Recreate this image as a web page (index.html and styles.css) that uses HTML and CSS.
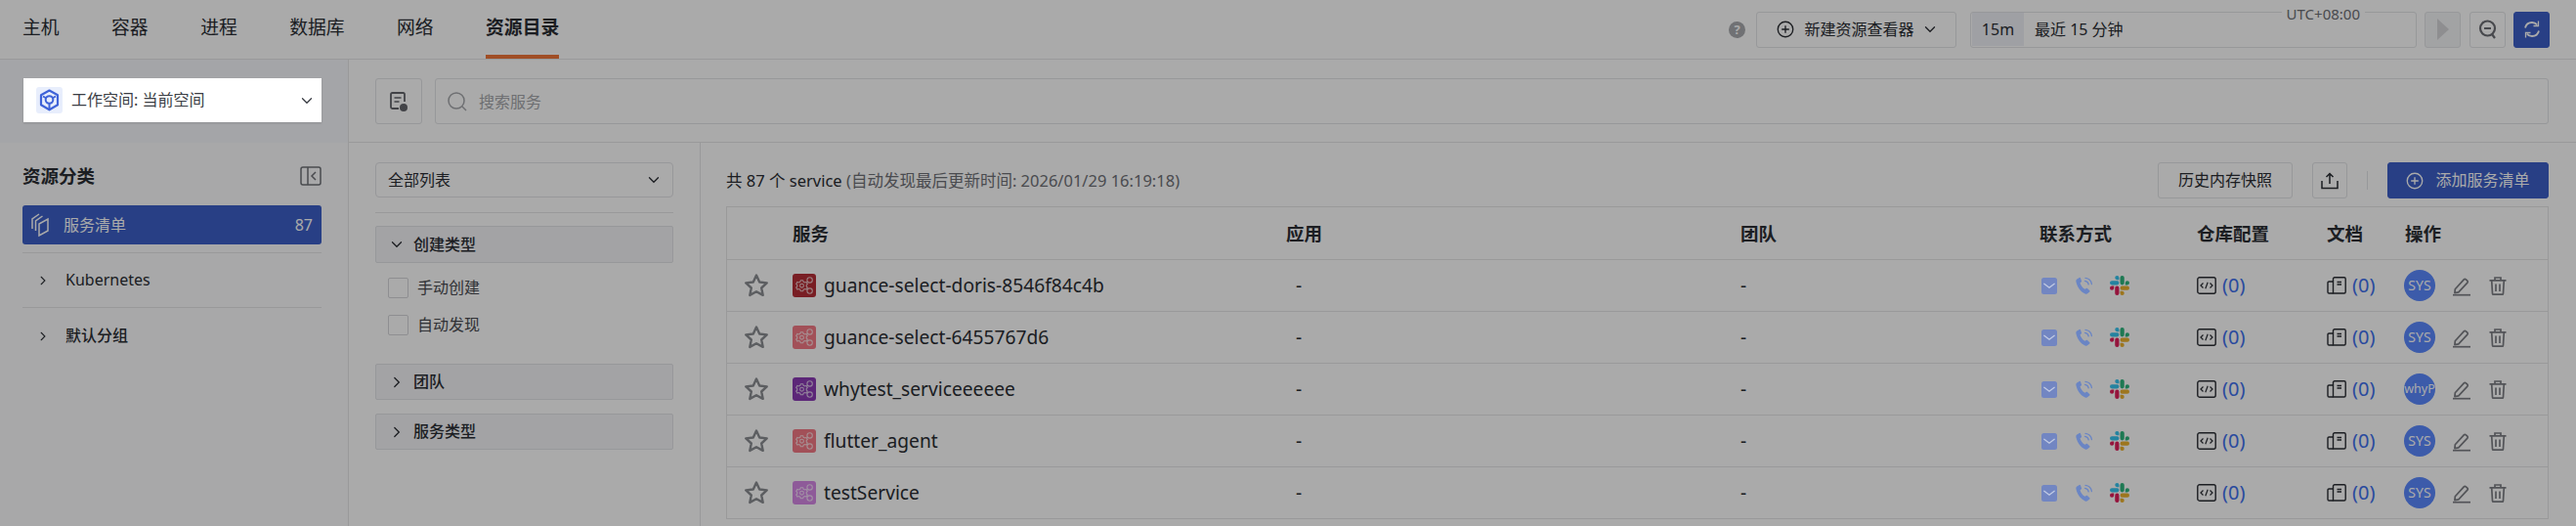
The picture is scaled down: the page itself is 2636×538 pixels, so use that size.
FILE: index.html
```html
<!DOCTYPE html>
<html lang="zh-CN">
<head>
<meta charset="utf-8">
<title>资源目录</title>
<link rel="stylesheet" href="styles.css">
</head>
<body>
<svg class="defs" width="0" height="0" aria-hidden="true">
  <defs>
    <symbol id="i-chev-d" viewBox="0 0 12 12"><path d="M1.5 3.8 6 8.3l4.5-4.5" fill="none" stroke="currentColor" stroke-width="1.3" stroke-linecap="round"/></symbol>
    <symbol id="i-chev-r" viewBox="0 0 12 12"><path d="M3.8 1.5 8.3 6l-4.5 4.5" fill="none" stroke="currentColor" stroke-width="1.3" stroke-linecap="round"/></symbol>
    <symbol id="i-plus" viewBox="0 0 20 20"><circle cx="10" cy="10" r="8.6" fill="none" stroke="currentColor" stroke-width="1.5"/><path d="M10 5.8v8.4M5.8 10h8.4" stroke="currentColor" stroke-width="1.5"/></symbol>
    <symbol id="i-star" viewBox="0 0 26 26"><path d="m13 2.6 3.2 6.9 7.5.9-5.5 5.1 1.5 7.4L13 19.2l-6.700 3.700 1.500-7.400-5.500-5.100 7.500-.9z" fill="none" stroke="currentColor" stroke-width="2.400" stroke-linejoin="round"/></symbol>
    <symbol id="i-svc" viewBox="0 0 24 24">
      <g fill="none" stroke="#fff" stroke-width="1.100">
        <circle cx="9.500" cy="12.200" r="1.900"/>
        <path d="m8.300 6.800 2.400 0 .5 1.500 1.500.7 1.400-.5 1.200 2-1.100 1.100v1.300l1.100 1.100-1.200 2-1.400-.5-1.500.7-.5 1.500H8.300l-.5-1.500-1.500-.7-1.400.5-1.200-2 1.100-1.100v-1.300L3.700 10.500l1.200-2 1.400.5 1.500-.7z"/>
        <circle cx="17.600" cy="6.400" r="2.700"/>
        <circle cx="17.600" cy="17.600" r="2.700"/>
      </g>
    </symbol>
    <symbol id="i-mail" viewBox="0 0 16 17"><rect width="16" height="17" rx="2.500" fill="#7286c2"/><path d="m2.800 6.300 5.200 4 5.200-4" fill="none" stroke="#c2cbe4" stroke-width="1.300" stroke-linecap="round"/></symbol>
    <symbol id="i-phone" viewBox="0 0 20 20"><path d="M2.300 3.600 4.800 1.900c.5-.3 1 0 1.200.5l1 2.800c.2.500 0 .9-.4 1.200L5.500 7.200c.6 2.500 2.700 5.400 5 6.600l1.300-.9c.4-.3.900-.2 1.200.1l2.300 2.300c.4.400.3 1-.1 1.300l-1.800 1.500c-.8.6-1.800.7-2.700.3C5.800 16.300 2.600 11.700 1.400 6c-.2-.9.200-1.900.9-2.400z" fill="#6a85c4"/><path d="M10.500 5.300c1.900.2 3.400 1.700 3.700 3.600M11 2.300c3.400.3 6 3 6.400 6.300" fill="none" stroke="#6a85c4" stroke-width="1.300" stroke-linecap="round"/></symbol>
    <symbol id="i-slack" viewBox="0 0 24 24">
      <path fill="#e01e5a" d="M5.042 15.165a2.528 2.528 0 0 1-2.520 2.523A2.528 2.528 0 0 1 0 15.165a2.527 2.527 0 0 1 2.522-2.520h2.520v2.520zM6.313 15.165a2.527 2.527 0 0 1 2.521-2.520 2.527 2.527 0 0 1 2.521 2.520v6.313A2.528 2.528 0 0 1 8.834 24a2.528 2.528 0 0 1-2.521-2.522v-6.313z"/>
      <path fill="#36c5f0" d="M8.834 5.042a2.528 2.528 0 0 1-2.521-2.520A2.528 2.528 0 0 1 8.834 0a2.528 2.528 0 0 1 2.521 2.522v2.520H8.834zM8.834 6.313a2.528 2.528 0 0 1 2.521 2.521 2.528 2.528 0 0 1-2.521 2.521H2.522A2.528 2.528 0 0 1 0 8.834a2.528 2.528 0 0 1 2.522-2.521h6.312z"/>
      <path fill="#2eb67d" d="M18.956 8.834a2.528 2.528 0 0 1 2.522-2.521A2.528 2.528 0 0 1 24 8.834a2.528 2.528 0 0 1-2.522 2.521h-2.522V8.834zM17.688 8.834a2.528 2.528 0 0 1-2.523 2.521 2.527 2.527 0 0 1-2.520-2.521V2.522A2.527 2.527 0 0 1 15.165 0a2.528 2.528 0 0 1 2.523 2.522v6.312z"/>
      <path fill="#ecb22e" d="M15.165 18.956a2.528 2.528 0 0 1 2.523 2.522A2.528 2.528 0 0 1 15.165 24a2.527 2.527 0 0 1-2.520-2.522v-2.522h2.520zM15.165 17.688a2.527 2.527 0 0 1-2.520-2.523 2.526 2.526 0 0 1 2.520-2.520h6.313A2.527 2.527 0 0 1 24 15.165a2.528 2.528 0 0 1-2.522 2.523h-6.313z"/>
    </symbol>
    <symbol id="i-code" viewBox="0 0 20 18"><rect x=".8" y=".8" width="18.400" height="16.400" rx="2" fill="none" stroke="currentColor" stroke-width="1.400"/><path d="M6.500 6.500 4 9l2.500 2.500M13.500 6.500 16 9l-2.500 2.500M11.200 5.800 8.800 12.200" fill="none" stroke="currentColor" stroke-width="1.200"/></symbol>
    <symbol id="i-doc" viewBox="0 0 20 18"><path d="M6.500 5H2.300C1.500 5 1 5.500 1 6.300v9.400c0 .8.500 1.300 1.300 1.300h4.200" fill="none" stroke="currentColor" stroke-width="1.400"/><path d="M6.500 17V2.300c0-.9.600-1.500 1.500-1.500h9.700c.9 0 1.500.6 1.500 1.500v13.200c0 .9-.6 1.500-1.500 1.500H6.500z" fill="none" stroke="currentColor" stroke-width="1.400"/><path d="M10.500 5.500h4.500M10.500 8h4.500" stroke="currentColor" stroke-width="1.300"/></symbol>
    <symbol id="i-pen" viewBox="0 0 20 20"><path d="m3.300 13.300 9-9.900c.6-.6 1.400-.6 2-.1l1.500 1.400c.6.600.6 1.400.1 2l-9.100 9.700-3.900.8z" fill="none" stroke="currentColor" stroke-width="1.700" stroke-linejoin="round"/><path d="M1 19.200h18" stroke="currentColor" stroke-width="1.700"/></symbol>
    <symbol id="i-trash" viewBox="0 0 20 20"><path d="M1.500 4.300h17M7 4.300V1.500h6v2.800M3.700 4.300l.8 13.400c0 .5.500 1 1 1h9c.5 0 1-.5 1-1l.8-13.400M8 8v7.500M12 8v7.500" fill="none" stroke="currentColor" stroke-width="1.700"/></symbol>
  </defs>
</svg>

<div class="app">
  <header class="topbar">
    <nav class="tabs">
      <span class="tab">主机</span>
      <span class="tab">容器</span>
      <span class="tab">进程</span>
      <span class="tab">数据库</span>
      <span class="tab">网络</span>
      <span class="tab tab-active">资源目录</span>
    </nav>
    <div class="top-tools">
      <span class="help">?</span>
      <button class="btn btn-new"><svg class="ic18"><use href="#i-plus"/></svg><span>新建资源查看器</span><svg class="ic12"><use href="#i-chev-d"/></svg></button>
      <div class="timebox">
        <span class="time-tag">15m</span>
        <span class="time-text">最近 15 分钟</span>
        <span class="tz">UTC+08:00</span>
      </div>
      <button class="btn btn-square btn-play"><svg width="12" height="22" viewBox="0 0 12 22"><path d="M0 0 12 11 0 22z" fill="#d6d6d9"/></svg></button>
      <button class="btn btn-square btn-zoom"><svg width="20" height="22" viewBox="0 0 20 22"><circle cx="9.500" cy="10" r="7.500" fill="none" stroke="currentColor" stroke-width="2.200"/><path d="M6 10h7M14 16l3 4" stroke="currentColor" stroke-width="2.200"/></svg></button>
      <button class="btn btn-square btn-refresh"><svg width="20" height="22" viewBox="0 0 20 22"><path d="M3 9.500C3.800 6 6.600 4 10 4c2.200 0 4 .9 5.200 2.400M17 12.500C16.200 16 13.400 18 10 18c-2.200 0-4-.9-5.200-2.400" fill="none" stroke="#fff" stroke-width="1.800"/><path d="M16.500 2.500v5h-5M3.500 19.500v-5h5" fill="none" stroke="#fff" stroke-width="1.300"/></svg></button>
    </div>
  </header>

  <div class="body">
    <aside class="side">
      <div class="side-band">
        <div class="workspace">
          <span class="ws-icon"><svg width="21" height="23" viewBox="0 0 21 23"><path d="M10.500 1.500 19 6.200v10.100l-8.500 5-8.500-5V6.200z" fill="none" stroke="#3f63d8" stroke-width="2.200" stroke-linejoin="round"/><circle cx="10.500" cy="11" r="3.800" fill="none" stroke="#3f63d8" stroke-width="2"/><path d="M10.500 15v6M4 7.500l3.500 2M17 7.500l-3.500 2" stroke="#3f63d8" stroke-width="2"/></svg></span>
          <span class="ws-text">工作空间: 当前空间</span>
          <svg class="ic12 ws-chev"><use href="#i-chev-d"/></svg>
        </div>
      </div>
      <div class="side-list">
        <div class="side-title">
          <span>资源分类</span>
          <svg width="22" height="20" viewBox="0 0 22 20"><rect x="1" y="1" width="20" height="18" rx="2" fill="none" stroke="currentColor" stroke-width="1.500"/><path d="M8 1v18M16 6l-4 4 4 4" fill="none" stroke="currentColor" stroke-width="1.500"/></svg>
        </div>
        <div class="side-active">
          <svg width="20" height="26" viewBox="0 0 20 26"><g fill="none" stroke="#fff" stroke-width="1.500"><path d="M2 17V7l7-5"/><path d="M5.500 19V9l7-5"/><path d="M9 24V12l9-5v12z"/></g></svg>
          <span class="side-active-name">服务清单</span>
          <span class="side-count">87</span>
        </div>
        <div class="side-group"><svg class="ic12"><use href="#i-chev-r"/></svg><span>Kubernetes</span></div>
        <div class="side-group side-group-strong"><svg class="ic12"><use href="#i-chev-r"/></svg><span>默认分组</span></div>
      </div>
    </aside>

    <main class="main">
      <div class="searchrow">
        <button class="btn search-hist"><svg width="20" height="22" viewBox="0 0 20 22"><path d="M16 11V3.500C16 2.500 15.500 2 14.500 2h-11C2.500 2 2 2.500 2 3.500v13c0 1 .5 1.500 1.500 1.500H10" fill="none" stroke="currentColor" stroke-width="1.800"/><path d="M5.500 7h7M5.500 11h5" stroke="currentColor" stroke-width="1.600"/><circle cx="15" cy="17" r="4" fill="currentColor"/></svg></button>
        <div class="search">
          <svg width="22" height="22" viewBox="0 0 22 22"><circle cx="10" cy="10" r="8" fill="none" stroke="currentColor" stroke-width="1.500"/><path d="m16 16 4 4" stroke="currentColor" stroke-width="1.500"/></svg>
          <span>搜索服务</span>
        </div>
      </div>

      <div class="content">
        <section class="filters">
          <div class="select"><span>全部列表</span><svg class="ic12"><use href="#i-chev-d"/></svg></div>
          <hr class="filter-line">
          <div class="fsec"><svg class="ic12"><use href="#i-chev-d"/></svg><span>创建类型</span></div>
          <label class="check"><span class="box"></span><span>手动创建</span></label>
          <label class="check"><span class="box"></span><span>自动发现</span></label>
          <div class="fsec fsec-team"><svg class="ic12"><use href="#i-chev-r"/></svg><span>团队</span></div>
          <div class="fsec fsec-type"><svg class="ic12"><use href="#i-chev-r"/></svg><span>服务类型</span></div>
        </section>

        <section class="list">
          <div class="toolbar">
            <p class="summary">共 87 个 service <span class="muted">(自动发现最后更新时间: 2026/01/29 16:19:18)</span></p>
            <button class="btn btn-hist">历史内存快照</button>
            <button class="btn btn-up"><svg width="18" height="18" viewBox="0 0 18 18"><path d="M1 9v7.500h16V9M9 12V2M5.500 5 9 1.500 12.500 5" fill="none" stroke="currentColor" stroke-width="1.500"/></svg></button>
            <span class="tool-sep"></span>
            <button class="btn btn-add"><svg class="ic18"><use href="#i-plus"/></svg><span>添加服务清单</span></button>
          </div>

          <div class="table">
            <div class="row row-head">
              <span></span><span>服务</span><span>应用</span><span>团队</span><span>联系方式</span><span>仓库配置</span><span>文档</span><span>操作</span>
            </div>

            <div class="row">
              <span class="star"><svg><use href="#i-star"/></svg></span>
              <span class="svc"><span class="svc-ic c-dark"><svg><use href="#i-svc"/></svg></span>guance-select-doris-8546f84c4b</span>
              <span class="dash-app">-</span><span>-</span>
              <span class="contact"><svg class="mail"><use href="#i-mail"/></svg><svg class="phone"><use href="#i-phone"/></svg><svg class="slack"><use href="#i-slack"/></svg></span>
              <span class="cnt"><svg><use href="#i-code"/></svg><a>(0)</a></span>
              <span class="cnt"><svg><use href="#i-doc"/></svg><a>(0)</a></span>
              <span class="ops"><span class="avatar">SYS</span><svg><use href="#i-pen"/></svg><svg><use href="#i-trash"/></svg></span>
            </div>
            <div class="row">
              <span class="star"><svg><use href="#i-star"/></svg></span>
              <span class="svc"><span class="svc-ic c-rose"><svg><use href="#i-svc"/></svg></span>guance-select-6455767d6</span>
              <span class="dash-app">-</span><span>-</span>
              <span class="contact"><svg class="mail"><use href="#i-mail"/></svg><svg class="phone"><use href="#i-phone"/></svg><svg class="slack"><use href="#i-slack"/></svg></span>
              <span class="cnt"><svg><use href="#i-code"/></svg><a>(0)</a></span>
              <span class="cnt"><svg><use href="#i-doc"/></svg><a>(0)</a></span>
              <span class="ops"><span class="avatar">SYS</span><svg><use href="#i-pen"/></svg><svg><use href="#i-trash"/></svg></span>
            </div>
            <div class="row">
              <span class="star"><svg><use href="#i-star"/></svg></span>
              <span class="svc"><span class="svc-ic c-purple"><svg><use href="#i-svc"/></svg></span>whytest_serviceeeeee</span>
              <span class="dash-app">-</span><span>-</span>
              <span class="contact"><svg class="mail"><use href="#i-mail"/></svg><svg class="phone"><use href="#i-phone"/></svg><svg class="slack"><use href="#i-slack"/></svg></span>
              <span class="cnt"><svg><use href="#i-code"/></svg><a>(0)</a></span>
              <span class="cnt"><svg><use href="#i-doc"/></svg><a>(0)</a></span>
              <span class="ops"><span class="avatar avatar-long">whyP</span><svg><use href="#i-pen"/></svg><svg><use href="#i-trash"/></svg></span>
            </div>
            <div class="row">
              <span class="star"><svg><use href="#i-star"/></svg></span>
              <span class="svc"><span class="svc-ic c-rose"><svg><use href="#i-svc"/></svg></span>flutter_agent</span>
              <span class="dash-app">-</span><span>-</span>
              <span class="contact"><svg class="mail"><use href="#i-mail"/></svg><svg class="phone"><use href="#i-phone"/></svg><svg class="slack"><use href="#i-slack"/></svg></span>
              <span class="cnt"><svg><use href="#i-code"/></svg><a>(0)</a></span>
              <span class="cnt"><svg><use href="#i-doc"/></svg><a>(0)</a></span>
              <span class="ops"><span class="avatar">SYS</span><svg><use href="#i-pen"/></svg><svg><use href="#i-trash"/></svg></span>
            </div>
            <div class="row">
              <span class="star"><svg><use href="#i-star"/></svg></span>
              <span class="svc"><span class="svc-ic c-violet"><svg><use href="#i-svc"/></svg></span>testService</span>
              <span class="dash-app">-</span><span>-</span>
              <span class="contact"><svg class="mail"><use href="#i-mail"/></svg><svg class="phone"><use href="#i-phone"/></svg><svg class="slack"><use href="#i-slack"/></svg></span>
              <span class="cnt"><svg><use href="#i-code"/></svg><a>(0)</a></span>
              <span class="cnt"><svg><use href="#i-doc"/></svg><a>(0)</a></span>
              <span class="ops"><span class="avatar">SYS</span><svg><use href="#i-pen"/></svg><svg><use href="#i-trash"/></svg></span>
            </div>
          </div>
        </section>
      </div>
    </main>
  </div>
</div>
<div class="scrim"></div>
</body>
</html>
```
FILE: styles.css
```css
* { box-sizing: border-box; }
html, body { margin: 0; height: 538px; overflow: hidden; }
body {
  position: relative;
  background: #fff;
  color: #2a2d33;
  font-family: "Noto Sans", "Noto Sans CJK SC", sans-serif;
  font-size: 16px;
  line-height: 1.4;
}
.defs { position: absolute; }
svg { display: block; flex: none; }
.ic12 { width: 12px; height: 12px; }
.ic18 { width: 18px; height: 18px; }
.btn {
  display: flex;
  align-items: center;
  justify-content: center;
  padding: 0;
  font: inherit;
  color: inherit;
  background: #fff;
  border: 1px solid #e3e4e7;
  border-radius: 3px;
}

.scrim {
  position: absolute;
  inset: 0;
  background: rgba(0, 0, 0, .335);
  z-index: 1;
}

/* top bar */
.topbar {
  height: 61px;
  display: flex;
  justify-content: space-between;
  padding: 0 27px 0 23px;
  border-bottom: 1px solid #e6e6e8;
}
.tabs { display: flex; gap: 53.500px; }
.tab {
  height: 60px;
  line-height: 56px;
  font-size: 18.800px;
  white-space: nowrap;
}
.tab-active {
  font-weight: 600;
  border-bottom: 4px solid #f0763a;
}
.top-tools { display: flex; align-items: center; }
.help {
  width: 17px;
  height: 17px;
  border-radius: 50%;
  background: #a9aaae;
  color: #fff;
  font-size: 13px;
  font-weight: 700;
  line-height: 17px;
  text-align: center;
  margin: 0 11px 0 0;
}
.btn-new {
  width: 205px;
  height: 37px;
  gap: 10px;
  margin-right: 14px;
  white-space: nowrap;
}
.timebox {
  position: relative;
  width: 457px;
  height: 37px;
  display: flex;
  align-items: center;
  border: 1px solid #e3e4e7;
  border-radius: 3px;
  margin-right: 8px;
}
.time-tag {
  width: 53px;
  height: 34px;
  line-height: 34px;
  text-align: center;
  background: #eff0f6;
  margin-left: 1px;
}
.time-text { margin-left: 11px; }
.tz {
  position: absolute;
  top: -9px;
  right: 52px;
  padding: 0 5px;
  background: #fff;
  font-size: 15px;
  color: #6d6f75;
  line-height: 20px;
}
.btn-square { width: 37px; height: 37px; }
.btn-play { background: #f4f5f7; margin-right: 9px; }
.btn-zoom { margin-right: 8px; color: #6c6e74; }
.btn-refresh { background: #3c5fc8; border-color: #3c5fc8; }

/* layout */
.body { display: flex; height: 477px; }
.side { width: 357px; flex: none; border-right: 1px solid #e6e6e8; background: #fcfdfe; }
.side-band { height: 85px; padding: 19px 27px 0 24px; background: #f7f8fc; }
.workspace {
  position: relative;
  z-index: 2;
  height: 45px;
  display: flex;
  align-items: center;
  padding: 0 9px 0 13px;
  background: #fff;
  box-shadow: 0 1px 2px rgba(0, 0, 0, .15);
  color: #3b3e45;
}
.ws-icon {
  width: 27px;
  height: 27px;
  display: flex;
  align-items: center;
  justify-content: center;
  background: #e8eefc;
  border-radius: 3px;
  margin-right: 9px;
}
.ws-text { flex: 1; white-space: nowrap; }
.side-list { padding: 21px 27px 0 23px; }
.side-title {
  height: 26px;
  display: flex;
  align-items: center;
  justify-content: space-between;
  font-size: 18.500px;
  font-weight: 600;
}
.side-title svg { color: #6f7177; }
.side-active {
  margin-top: 17px;
  height: 40px;
  display: flex;
  align-items: center;
  padding: 0 9px 0 8px;
  background: #3c5fc8;
  color: #fff;
  border-radius: 3px;
}
.side-active-name { margin-left: 14px; flex: 1; }
.side-group {
  height: 57px;
  display: flex;
  align-items: center;
  padding-left: 16px;
  gap: 18px;
}
.side-active + .side-group { margin-top: 8px; border-top: 1px solid #e6e6e8; border-bottom: 1px solid #e6e6e8; }
.side-group-strong { font-weight: 500; }
.side-group svg { width: 10px; height: 12px; }

.main { flex: 1; min-width: 0; }
.searchrow {
  height: 85px;
  display: flex;
  gap: 13px;
  padding: 19px 28px 0 27px;
  border-bottom: 1px solid #e6e6e8;
}
.search-hist { width: 48px; height: 47px; color: #63656b; flex: none; }
.search {
  flex: 1;
  height: 47px;
  display: flex;
  align-items: center;
  gap: 11px;
  padding: 1px 0 0 11px;
  color: #a5a7ab;
  border: 1px solid #e3e4e7;
  border-radius: 3px;
}
.content { display: flex; height: 392px; }
.filters {
  width: 360px;
  flex: none;
  padding: 20px 27px 0;
  border-right: 1px solid #e6e6e8;
}
.select {
  height: 36px;
  display: flex;
  align-items: center;
  justify-content: space-between;
  padding: 0 13px 0 12px;
  border: 1px solid #e3e4e7;
  border-radius: 4px;
}
.filter-line { margin: 15px 0 13px; border: 0; border-top: 1px solid #e6e6e8; }
.fsec {
  height: 38px;
  display: flex;
  align-items: center;
  gap: 11px;
  padding-left: 15px;
  font-weight: 500;
  background: #f5f5f8;
  border: 1px solid #e3e4e7;
  border-radius: 2px;
}
.fsec svg { width: 12px; }
.check {
  height: 38px;
  display: flex;
  align-items: center;
  gap: 9px;
  padding-left: 13px;
  color: #4a4c52;
}
.check:first-of-type { margin-top: 6px; }
.box {
  width: 21px;
  height: 21px;
  background: #fff;
  border: 1px solid #d5d6da;
  border-radius: 2px;
}
.fsec-team { margin-top: 21px; height: 37px; }
.fsec-type { margin-top: 14px; height: 37px; }

.list { flex: 1; min-width: 0; padding: 20px 28px 0 26px; }
.toolbar { height: 37px; display: flex; align-items: center; margin-bottom: 8px; }
.summary { margin: 0 auto 0 0; white-space: nowrap; font-size: 16.500px; }
.muted { color: #6f7177; }
.btn-hist { width: 138px; height: 37px; }
.btn-up { width: 36px; height: 37px; margin-left: 20px; }
.tool-sep { width: 1px; height: 19px; margin: 0 20px; background: #e3e4e7; }
.btn-add {
  width: 165px;
  height: 37px;
  gap: 12px;
  background: #3c5fc8;
  border-color: #3c5fc8;
  color: #fff;
}

.table { border: 1px solid #e6e6e8; border-bottom: 0; }
.row {
  display: grid;
  grid-template-columns: 67px 505px 465px 306px 161px 133px 80px 1fr;
  align-items: center;
  height: 53px;
  border-bottom: 1px solid #e6e6e8;
  font-size: 19.200px;
  white-space: nowrap;
}
.row-head { height: 54px; font-weight: 600; font-size: 18.500px; }
.star { padding-left: 17px; color: #8b8d92; }
.star svg { width: 26px; height: 26px; }
.svc { display: flex; align-items: center; gap: 8px; }
.svc-ic { width: 24px; height: 24px; border-radius: 3px; }
.svc-ic svg { width: 24px; height: 24px; opacity: .7; }
.c-dark { background: #b62e36; }
.c-rose { background: #f37985; }
.c-purple { background: #8a3ab4; }
.c-violet { background: #d687e6; }
.dash-app { padding-left: 10px; }
.contact { display: flex; align-items: center; padding-left: 2px; }
.mail { width: 16px; height: 17px; position: relative; z-index: 2; }
.phone { width: 20px; height: 20px; margin-left: 18px; position: relative; z-index: 2; }
.slack { width: 20px; height: 20px; margin-left: 16px; }
.cnt { display: flex; align-items: center; gap: 6px; }
.cnt svg { width: 20px; height: 18px; }
.cnt a { color: #4070ee; font-size: 20px; }
.ops { display: flex; align-items: center; color: #7d7f85; }
.ops svg { width: 20px; height: 21px; margin-left: 17px; }
.avatar {
  width: 32px;
  height: 32px;
  border-radius: 50%;
  margin-left: -1px;
  background: #5a89ff;
  color: #fff;
  font-size: 14px;
  line-height: 32px;
  text-align: center;
}
.avatar-long { font-size: 12.500px; }
```
